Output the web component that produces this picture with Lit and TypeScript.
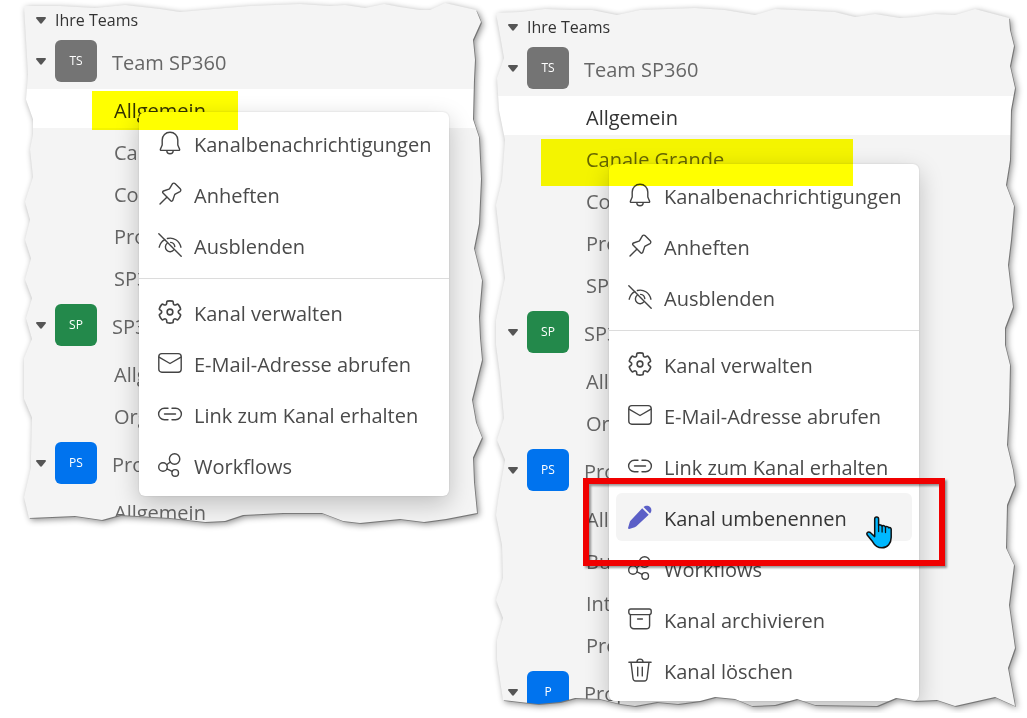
import { LitElement, html, svg, css, unsafeCSS, nothing } from "lit";
import { customElement, property } from "lit/decorators.js";
import { classMap } from "lit/directives/class-map.js";

type Point = [number, number];
interface Sheet {
  x: number;
  y: number;
  w: number;
  h: number;
  top: Point[];
  right: Point[];
  bottom: Point[];
  left: Point[];
}

/* Builds a ragged paper outline. Positions along an edge are relative,
   the depth of each tear is kept in pixels. */
function tornEdge(s: Sheet) {
  const px = (v: number) => `${v}px`;
  const far = (v: number) => `calc(100% - ${v}px)`;
  const pc = (v: number, size: number) => `${((v / size) * 100).toFixed(2)}%`;
  const pts = [
    ...s.top.map(([x, y]) => `${pc(x - s.x, s.w)} ${px(y - s.y)}`),
    ...s.right.map(([x, y]) => `${far(s.x + s.w - x)} ${pc(y - s.y, s.h)}`),
    ...s.bottom.map(([x, y]) => `${pc(x - s.x, s.w)} ${far(s.y + s.h - y)}`),
    ...s.left.map(([x, y]) => `${px(x - s.x)} ${pc(y - s.y, s.h)}`),
  ];
  return unsafeCSS(`polygon(${pts.join(", ")})`);
}

const SMALL_SHEET = tornEdge({
  x: 23, y: 1, w: 460, h: 532,
  top: [[24, 6], [60, 6], [95, 8], [125, 5], [160, 9], [180, 12], [225, 8], [250, 6], [300, 4], [330, 6], [345, 5], [365, 8], [384, 4], [400, 7], [420, 10], [430, 10], [445, 3], [476, 10]],
  right: [[481, 22], [473, 40], [475, 60], [474, 80], [473, 120], [479, 138], [481, 180], [479, 225], [474, 250], [482, 282], [479, 318], [480, 340], [482, 362], [472, 402], [476, 425], [482, 440], [473, 460], [474, 485], [477, 516]],
  bottom: [[446, 522], [424, 525], [400, 522], [360, 526], [343, 524], [322, 516], [283, 516], [243, 518], [225, 524], [205, 525], [170, 521], [120, 518], [102, 523], [75, 519], [29, 521]],
  left: [[24, 500], [31, 470], [31, 459], [32, 420], [24, 401], [24, 360], [32, 341], [26, 320], [32, 300], [25, 281], [31, 260], [25, 241], [30, 221], [25, 203], [33, 178], [30, 150], [33, 135], [33, 120], [26, 100], [28, 75], [26, 40]],
});

const LARGE_SHEET = tornEdge({
  x: 495, y: 8, w: 522, h: 705,
  top: [[496, 13], [520, 12], [545, 9], [570, 10], [592, 10], [617, 15], [640, 10], [695, 8], [725, 10], [755, 15], [775, 9], [835, 12], [855, 17], [875, 14], [900, 18], [915, 17], [935, 14], [955, 15], [975, 9], [1009, 18]],
  right: [[1010, 30], [1014, 46], [1010, 66], [1015, 88], [1011, 110], [1010, 160], [1006, 185], [1014, 206], [1011, 240], [1008, 265], [1013, 307], [1005, 328], [1005, 345], [1010, 365], [1009, 410], [1007, 445], [1013, 470], [1015, 485], [1007, 505], [1006, 548], [1014, 565], [1009, 605], [1015, 648], [1008, 668], [1015, 706]],
  bottom: [[995, 697], [955, 706], [937, 700], [915, 701], [896, 698], [877, 706], [815, 705], [797, 699], [775, 705], [752, 706], [735, 699], [715, 697], [700, 701], [678, 704], [657, 702], [635, 706], [620, 704], [600, 699], [575, 698], [560, 702], [538, 704], [520, 702], [503, 700]],
  left: [[497, 660], [497, 640], [503, 618], [496, 600], [503, 578], [502, 545], [496, 515], [498, 500], [505, 460], [497, 440], [504, 418], [500, 375], [496, 345], [496, 320], [505, 278], [500, 240], [496, 205], [502, 180], [505, 140], [499, 110], [497, 78], [504, 58], [500, 35]],
});

const ICONS: Record<string, unknown> = {
  bell: svg`<path d="M12 1.2c4.4 0 7.8 3.4 7.8 7.8v5l1.8 4.2c.2.6-.1 1.2-.8 1.2H3.2c-.7 0-1-.6-.8-1.2L4.2 14V9c0-4.400 3.400-7.800 7.800-7.800z"/><path d="M8.800 19.600a3.200 3.200 0 0 0 6.400 0"/>`,
  pin: svg`<path d="M14.400 1.800c.9-.9 2-.8 2.800 0l5 5c.9.9.8 2.200-.2 2.800l-4.800 2.600c-.3.200-.500.400-.6.700l-1.800 5.400c-.3.9-1.400 1.200-2.100.5L5 11.100c-.7-.7-.4-1.800.5-2.100l5.400-1.800c.3-.1.6-.3.7-.6z"/><path d="M8.800 15.200 2 22"/>`,
  hide: svg`<path d="M.8.8l22.400 22.400"/><path d="M6.800 6.600C4 8 2 10.800 1.200 14.200M9.400 5.500c6-1.500 12 2 13.500 8.700M9.200 10.300a4.700 4.700 0 1 0 6.600 6.600M12.600 9.400a4.700 4.700 0 0 1 4.200 4.200"/>`,
  gear: svg`<g transform="translate(-1.700 -1.700) scale(1.140)"><path d="M12.010 2.250c.74 0 1.470.1 2.180.25.32.07.55.33.59.65l.17 1.530a1.380 1.380 0 0 0 1.920 1.110l1.400-.61c.3-.13.64-.06.85.17a9.800 9.800 0 0 1 2.200 3.800c.1.3 0 .63-.26.82l-1.250.92a1.380 1.380 0 0 0 0 2.220l1.250.92c.26.19.36.52.27.82a9.800 9.800 0 0 1-2.200 3.800.75.75 0 0 1-.85.17l-1.410-.62a1.380 1.380 0 0 0-1.930 1.120l-.17 1.520a.75.75 0 0 1-.58.65 9.520 9.520 0 0 1-4.400 0 .75.75 0 0 1-.57-.65l-.17-1.520a1.380 1.380 0 0 0-1.930-1.110l-1.400.62a.75.75 0 0 1-.85-.18 9.800 9.800 0 0 1-2.200-3.800c-.1-.3 0-.63.26-.82l1.250-.92a1.380 1.380 0 0 0 0-2.220l-1.250-.92a.75.75 0 0 1-.27-.82 9.800 9.800 0 0 1 2.200-3.800c.2-.23.55-.3.85-.17l1.400.62a1.380 1.380 0 0 0 1.930-1.120l.17-1.530c.04-.32.27-.58.6-.65.7-.15 1.420-.24 2.170-.25Z"/><circle cx="12" cy="12" r="2.500"/></g>`,
  mail: svg`<rect x=".8" y="2.600" width="22.400" height="18.600" rx="3"/><path d="M1 6.200l11 6.300 11-6.300"/>`,
  link: svg`<path d="M10 6.200H6.400a5.800 5.800 0 0 0 0 11.600H10M14 6.200h3.600a5.800 5.800 0 0 1 0 11.600H14M6.500 12h11"/>`,
  flow: svg`<circle cx="16.600" cy="6" r="5.200"/><circle cx="5" cy="14" r="4.300"/><circle cx="17.200" cy="19.900" r="3.300"/><path d="M8.700 11.700l3.600-2.700M9 15.900l5.100 2.500"/>`,
  archive: svg`<rect x=".8" y="2" width="22.400" height="5.600" rx="2"/><path d="M2.400 7.600v10.800a3.400 3.400 0 0 0 3.400 3.400h12.400a3.400 3.400 0 0 0 3.400-3.400V7.600M9.600 12h4.800"/>`,
  trash: svg`<path d="M.9 4.200h22.200M8.900 4.200a3.100 3.100 0 0 1 6.200 0M3 4.200l2 16.300c.2 1.500 1.200 2.500 2.700 2.500h8.600c1.500 0 2.500-1 2.700-2.500l2-16.300M9.700 9.300v8.600M14.300 9.300v8.600"/>`,
  pencil: svg`<g class="solid"><path d="M14.200 3.300l6.500 6.500L8.400 21.300c-.5.500-1 .8-1.700 1L1.200 23.900c-.8.200-1.300-.3-1.100-1.100l1.600-5.500c.2-.6.500-1.200 1-1.700z"/><path d="M15.500 2.100c1.900-1.900 4.800-1.900 6.600-.1 1.800 1.800 1.800 4.700-.1 6.600z"/></g>`,
};

interface MenuEntry {
  icon: string;
  label: string;
  active?: boolean;
}

@customElement("channel-menu")
export class ChannelMenu extends LitElement {
  @property({ attribute: false }) groups: MenuEntry[][] = [];

  static styles = css`
    :host {
      display: flex;
      flex-direction: column;
      box-sizing: border-box;
      padding: 7px 0;
      border-radius: 6px;
      background: #fff;
      box-shadow: 0 8px 24px rgba(0, 0, 0, 0.22), 0 0 2px rgba(0, 0, 0, 0.14);
    }
    .group {
      display: flex;
      flex-direction: column;
      gap: 3px;
      padding: 0 7px;
    }
    .group + .group {
      margin-top: 9px;
      padding-top: 9px;
      border-top: 1px solid #dcdcdc;
    }
    .entry {
      display: flex;
      align-items: center;
      gap: 12px;
      height: 48px;
      padding: 0 12px;
      border: 0;
      border-radius: 6px;
      background: none;
      color: #4a4a4a;
      font: inherit;
      text-align: left;
      white-space: nowrap;
      cursor: pointer;
    }
    .entry.active {
      background: #f4f4f4;
      color: #363636;
    }
    .label {
      padding-top: 4px;
    }
    .icon {
      flex: none;
      width: 24px;
      height: 24px;
      overflow: visible;
      fill: none;
      stroke: #444;
      stroke-width: 1.4;
      stroke-linecap: round;
      stroke-linejoin: round;
    }
    .solid {
      fill: #5b5fc7;
      stroke: none;
    }
  `;

  render() {
    return this.groups.map(
      (group) => html`<div class="group" role="menu">
        ${group.map(
          (e) => html`<button class=${classMap({ entry: true, active: !!e.active })} role="menuitem">
            <svg class="icon" viewBox="0 0 24 24" aria-hidden="true">${ICONS[e.icon]}</svg>
            <span class="label">${e.label}</span>
          </button>`,
        )}
      </div>`,
    );
  }
}

interface Team {
  initials: string;
  tone: string;
  name: string;
  channels: string[];
  selected?: string;
}

@customElement("team-list")
export class TeamList extends LitElement {
  @property({ attribute: false }) teams: Team[] = [];

  static styles = css`
    :host {
      display: block;
      color: #666;
    }
    .row {
      display: flex;
      align-items: center;
      box-sizing: border-box;
      width: 100%;
      border: 0;
      background: none;
      color: inherit;
      font: inherit;
      text-align: left;
      white-space: nowrap;
      cursor: pointer;
    }
    .arrow {
      flex: none;
      width: 10px;
      height: 7px;
      fill: #555;
    }
    .heading {
      gap: 9px;
      height: 34px;
      padding: 4px 0 0 13px;
      color: #333;
      font-size: 16px;
    }
    .team {
      padding: 5px 0 7px 13px;
    }
    .badge {
      flex: none;
      display: grid;
      place-items: center;
      width: 42px;
      height: 42px;
      margin: 0 15px 0 9px;
      border-radius: 6px;
      color: #fff;
      font-size: 12px;
    }
    .name {
      padding-top: 4px;
    }
    .gray { background: #747474; }
    .green { background: #23894b; }
    .blue { background: #0073ee; }
    .channel {
      height: 39px;
      margin-bottom: 3px;
      padding: 4px 0 0 91px;
    }
    .channel.selected {
      background: #fff;
      color: #333;
    }
    .team:last-child {
      padding-bottom: 0;
    }
  `;

  private arrow() {
    return html`<svg class="arrow" viewBox="0 0 10 7" aria-hidden="true">
      <path d="M1 0h8c.9 0 1.200.8.7 1.500L5.900 6.200c-.5.600-1.300.600-1.800 0L.3 1.500C-.2.8.1 0 1 0z" />
    </svg>`;
  }

  render() {
    return html`<button class="row heading">${this.arrow()}Ihre Teams</button>
      ${this.teams.map(
        (t) => html`<button class="row team">
            ${this.arrow()}<span class="badge ${t.tone}">${t.initials}</span><span class="name">${t.name}</span>
          </button>
          ${t.channels.map(
            (c) => html`<button class=${classMap({ row: true, channel: true, selected: c === t.selected })}>${c}</button>`,
          )}`,
      )}`;
  }
}

const NOTIFY: MenuEntry[] = [
  { icon: "bell", label: "Kanalbenachrichtigungen" },
  { icon: "pin", label: "Anheften" },
  { icon: "hide", label: "Ausblenden" },
];
const MANAGE: MenuEntry[] = [
  { icon: "gear", label: "Kanal verwalten" },
  { icon: "mail", label: "E-Mail-Adresse abrufen" },
  { icon: "link", label: "Link zum Kanal erhalten" },
];
const WORKFLOWS: MenuEntry = { icon: "flow", label: "Workflows" };

const GENERAL_MENU = [NOTIFY, [...MANAGE, WORKFLOWS]];
const CHANNEL_MENU = [
  NOTIFY,
  [
    ...MANAGE,
    { icon: "pencil", label: "Kanal umbenennen", active: true },
    WORKFLOWS,
    { icon: "archive", label: "Kanal archivieren" },
    { icon: "trash", label: "Kanal löschen" },
  ],
];

const SP_TEAMS: Team[] = [
  {
    initials: "TS", tone: "gray", name: "Team SP360", selected: "Allgemein",
    channels: ["Allgemein", "Canale Grande", "Co", "Pro", "SP3"],
  },
  { initials: "SP", tone: "green", name: "SP3", channels: ["Allg", "Org"] },
];

const SHORT_LIST: Team[] = [...SP_TEAMS, { initials: "PS", tone: "blue", name: "Pro", channels: ["Allgemein"] }];
const LONG_LIST: Team[] = [
  ...SP_TEAMS,
  { initials: "PS", tone: "blue", name: "Pro", channels: ["Allg", "Bud", "Int", "Pro"] },
  { initials: "P", tone: "blue", name: "Proj", channels: [] },
];

@customElement("app-root")
export class AppRoot extends LitElement {
  static styles = css`
    :host {
      display: grid;
      grid-template-columns: 460fr 522fr;
      align-items: start;
      gap: 12px;
      padding: 1px 10px 0 23px;
      overflow: hidden;
      background: #fff;
      font: 20px/28px "Open Sans", "Noto Sans", sans-serif;
    }
    .shot {
      position: relative;
      filter: drop-shadow(1px 1px 0 rgba(0, 0, 0, 0.3)) drop-shadow(2px 2px 3px rgba(0, 0, 0, 0.45));
    }
    .large {
      margin-top: 7px;
    }
    .paper {
      position: relative;
      background: #f4f4f4;
    }
    .small .paper {
      clip-path: ${SMALL_SHEET};
    }
    .large .paper {
      clip-path: ${LARGE_SHEET};
    }
    .menu {
      position: absolute;
      width: 310px;
    }
    .small .menu {
      left: 116px;
      top: 111px;
    }
    .large .menu {
      left: 114px;
      top: 156px;
    }
    .marker {
      position: absolute;
      background: #ff0;
      mix-blend-mode: multiply;
      pointer-events: none;
    }
    .small .marker {
      left: 69px;
      top: 90px;
      width: 146px;
      height: 39px;
    }
    .large .marker {
      left: 46px;
      top: 131px;
      width: 312px;
      height: 47px;
    }
    .frame {
      position: absolute;
      left: 88px;
      top: 470px;
      box-sizing: border-box;
      width: 362px;
      height: 88px;
      border: 6px solid #f00000;
      filter: drop-shadow(2px 2px 1px rgba(0, 0, 0, 0.4));
      pointer-events: none;
    }
    .hand {
      position: absolute;
      left: 371px;
      top: 508px;
      width: 26px;
      height: 33px;
      pointer-events: none;
    }
  `;

  private shot(size: string, teams: Team[], menu: MenuEntry[][], notes: unknown) {
    return html`<section class="shot ${size}">
      <div class="paper">
        <team-list .teams=${teams}></team-list>
        <channel-menu class="menu" .groups=${menu}></channel-menu>
        <div class="marker"></div>
        ${notes}
      </div>
    </section>`;
  }

  render() {
    const notes = html`<div class="frame"></div>
      <svg class="hand" viewBox="0 0 26 33" aria-hidden="true">
        <path
          d="M8.700 3c0-2.700 3.900-2.700 3.900 0v6.400c.5-.9 3.200-.7 3.500.7.700-.9 3-.6 3.400.9.800-.800 2.800-.500 3.200.8.900-.7 2.500 0 2.500 1.500v8c0 5.800-3.600 10.500-9.200 10.500-4.500 0-7.300-2.300-9.300-6L1.200 19c-1.200-2.300 1.200-4 3.300-2.300l4.200 3.900z"
          fill="#00b8ff"
          stroke="#111"
          stroke-width="1.500"
          stroke-linejoin="round"
        />
        <path d="M12.600 9v6.500M16.100 10v6M19.500 11v5.500" fill="none" stroke="#111" stroke-width="1.300" stroke-linecap="round" />
      </svg>`;
    return html`${this.shot("small", SHORT_LIST, GENERAL_MENU, nothing)} ${this.shot("large", LONG_LIST, CHANNEL_MENU, notes)}`;
  }
}
